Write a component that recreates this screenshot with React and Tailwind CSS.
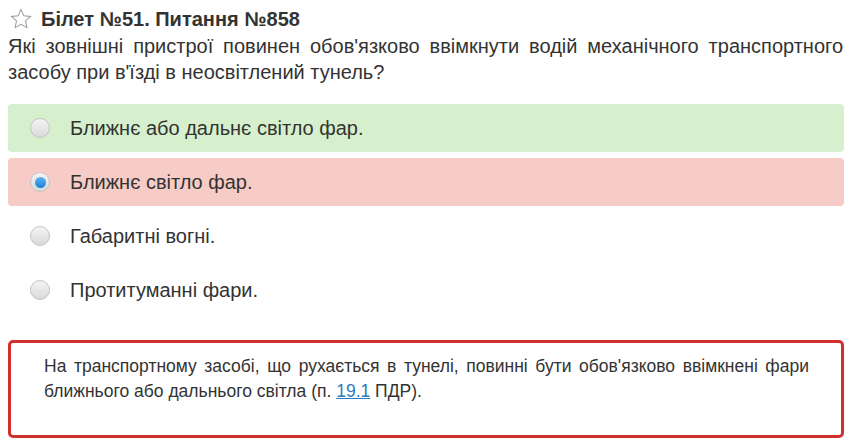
import React from "react";

const options = [
  { text: "Ближнє або дальнє світло фар.", state: "correct" },
  { text: "Ближнє світло фар.", state: "wrong" },
  { text: "Габаритні вогні.", state: "none" },
  { text: "Протитуманні фари.", state: "none" },
];

function Star() {
  return (
    <svg width="22" height="21" viewBox="0 0 24 23" className="shrink-0">
      <path
        d="M12 1.5l3.1 6.9 7.4.8-5.6 5 1.6 7.3L12 17.8l-6.5 3.7 1.6-7.3-5.6-5 7.4-.8z"
        fill="none"
        stroke="#9a9a9a"
        strokeWidth="1.1"
        strokeLinejoin="miter"
      />
    </svg>
  );
}

function Radio({ checked }) {
  return (
    <span className="w-[20px] h-[20px] rounded-full border border-[#c4c4c4] bg-gradient-to-b from-[#f4f4f4] to-[#d9d9d9] flex items-center justify-center shrink-0">
      {checked && (
        <span className="w-[11px] h-[11px] rounded-full bg-gradient-to-b from-[#5cb4f4] to-[#1a7fd8]" />
      )}
    </span>
  );
}

export default function App() {
  return (
    <div
      className="w-[852px] h-[444px] bg-white px-2 text-[#333]"
      style={{ fontFamily: '"Liberation Sans", Arial, sans-serif' }}
    >
      <div className="flex items-center gap-[9px] pl-[2px] pt-[4px] h-[33px]">
        <Star />
        <h1 className="text-[20px] font-bold leading-none">Білет №51. Питання №858</h1>
      </div>
      <p className="text-[20px] leading-[26px] text-justify pr-[1px]">
        Які зовнішні пристрої повинен обов'язково ввімкнути водій механічного транспортного засобу при в'їзді в неосвітлений тунель?
      </p>
      <div className="mt-[19px] flex flex-col gap-[6px]">
        {options.map((o) => (
          <div
            key={o.text}
            className={
              "h-[48px] rounded-[4px] flex items-center pl-[22px] gap-[20px] " +
              (o.state === "correct"
                ? "bg-[#d6f0cd]"
                : o.state === "wrong"
                ? "bg-[#f8ccc6]"
                : "bg-white")
            }
          >
            <Radio checked={o.state === "wrong"} />
            <span className="text-[20px]">{o.text}</span>
          </div>
        ))}
      </div>
      <div className="mt-[26px] h-[98px] border-[3px] border-[#d2302f] rounded-[5px] pl-[33px] pr-[32px] pt-[11px]">
        <p className="text-[17.5px] leading-[25px] text-justify">
          На транспортному засобі, що рухається в тунелі, повинні бути обов'язково ввімкнені фари ближнього або дальнього світла (п.{" "}
          <a href="#" className="text-[#2a7ac0] underline">19.1</a> ПДР).
        </p>
      </div>
    </div>
  );
}
